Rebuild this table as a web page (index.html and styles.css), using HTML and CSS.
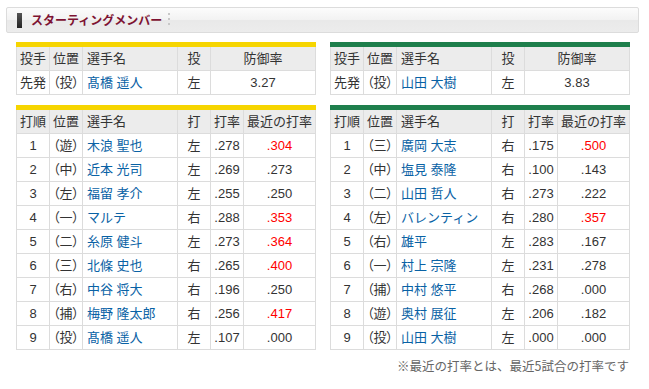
FILE: index.html
```html
<!DOCTYPE html>
<html lang="ja">
<head>
<meta charset="utf-8">
<link rel="stylesheet" href="styles.css">
</head>
<body>
<div class="page">
  <div class="head">
    <span class="head-mark"></span>
    <h2 class="head-title">スターティングメンバー</h2>
    <span class="head-sep"></span>
  </div>
  <div class="teams">
    <div class="team home">
      <table class="tbl">
        <colgroup><col class="c1"><col class="c2"><col class="c3"><col class="c4"><col class="c5p"></colgroup>
        <tr><th>投手</th><th>位置</th><th class="name">選手名</th><th>投</th><th>防御率</th></tr>
        <tr><td>先発</td><td class="pos">（投）</td><td class="name"><a>髙橋 遥人</a></td><td>左</td><td>3.27</td></tr>
      </table>
      <table class="tbl">
        <colgroup><col class="c1"><col class="c2"><col class="c3"><col class="c4"><col class="c5"><col class="c6"></colgroup>
        <tr><th>打順</th><th>位置</th><th class="name">選手名</th><th>打</th><th>打率</th><th>最近の打率</th></tr>
        <tr><td>1</td><td class="pos">（遊）</td><td class="name"><a>木浪 聖也</a></td><td>左</td><td>.278</td><td class="hot">.304</td></tr>
        <tr><td>2</td><td class="pos">（中）</td><td class="name"><a>近本 光司</a></td><td>左</td><td>.269</td><td>.273</td></tr>
        <tr><td>3</td><td class="pos">（左）</td><td class="name"><a>福留 孝介</a></td><td>左</td><td>.255</td><td>.250</td></tr>
        <tr><td>4</td><td class="pos">（一）</td><td class="name"><a>マルテ</a></td><td>右</td><td>.288</td><td class="hot">.353</td></tr>
        <tr><td>5</td><td class="pos">（二）</td><td class="name"><a>糸原 健斗</a></td><td>左</td><td>.273</td><td class="hot">.364</td></tr>
        <tr><td>6</td><td class="pos">（三）</td><td class="name"><a>北條 史也</a></td><td>右</td><td>.265</td><td class="hot">.400</td></tr>
        <tr><td>7</td><td class="pos">（右）</td><td class="name"><a>中谷 将大</a></td><td>右</td><td>.196</td><td>.250</td></tr>
        <tr><td>8</td><td class="pos">（捕）</td><td class="name"><a>梅野 隆太郎</a></td><td>右</td><td>.256</td><td class="hot">.417</td></tr>
        <tr><td>9</td><td class="pos">（投）</td><td class="name"><a>髙橋 遥人</a></td><td>左</td><td>.107</td><td>.000</td></tr>
      </table>
    </div>
    <div class="team away">
      <table class="tbl">
        <colgroup><col class="c1"><col class="c2"><col class="c3"><col class="c4"><col class="c5p"></colgroup>
        <tr><th>投手</th><th>位置</th><th class="name">選手名</th><th>投</th><th>防御率</th></tr>
        <tr><td>先発</td><td class="pos">（投）</td><td class="name"><a>山田 大樹</a></td><td>左</td><td>3.83</td></tr>
      </table>
      <table class="tbl">
        <colgroup><col class="c1"><col class="c2"><col class="c3"><col class="c4"><col class="c5"><col class="c6"></colgroup>
        <tr><th>打順</th><th>位置</th><th class="name">選手名</th><th>打</th><th>打率</th><th>最近の打率</th></tr>
        <tr><td>1</td><td class="pos">（三）</td><td class="name"><a>廣岡 大志</a></td><td>右</td><td>.175</td><td class="hot">.500</td></tr>
        <tr><td>2</td><td class="pos">（中）</td><td class="name"><a>塩見 泰隆</a></td><td>右</td><td>.100</td><td>.143</td></tr>
        <tr><td>3</td><td class="pos">（二）</td><td class="name"><a>山田 哲人</a></td><td>右</td><td>.273</td><td>.222</td></tr>
        <tr><td>4</td><td class="pos">（左）</td><td class="name"><a>バレンティン</a></td><td>右</td><td>.280</td><td class="hot">.357</td></tr>
        <tr><td>5</td><td class="pos">（右）</td><td class="name"><a>雄平</a></td><td>左</td><td>.283</td><td>.167</td></tr>
        <tr><td>6</td><td class="pos">（一）</td><td class="name"><a>村上 宗隆</a></td><td>左</td><td>.231</td><td>.278</td></tr>
        <tr><td>7</td><td class="pos">（捕）</td><td class="name"><a>中村 悠平</a></td><td>右</td><td>.268</td><td>.000</td></tr>
        <tr><td>8</td><td class="pos">（遊）</td><td class="name"><a>奥村 展征</a></td><td>左</td><td>.206</td><td>.182</td></tr>
        <tr><td>9</td><td class="pos">（投）</td><td class="name"><a>山田 大樹</a></td><td>左</td><td>.000</td><td>.000</td></tr>
      </table>
      <p class="note">※最近の打率とは、最近5試合の打率です</p>
    </div>
  </div>
</div>
</body>
</html>
```
FILE: styles.css
```css
* { box-sizing: border-box; }
html, body { margin: 0; padding: 0; background: #fff; }
body {
  font-family: "Liberation Sans", "Noto Sans CJK JP", sans-serif;
  font-size: 13px;
  color: #333;
}
.page { padding: 7px 10px 0 6px; }
.head {
  display: flex;
  align-items: center;
  height: 26px;
  border: 1px solid #dcdcdc;
  border-radius: 2px;
  background: linear-gradient(#fcfcfc 0%, #f2f2f2 50%, #e9e9e9 52%, #ececec 100%);
  padding-left: 10px;
}
.head-mark {
  width: 5px;
  height: 15px;
  background: linear-gradient(#555, #222);
}
.head-title {
  margin: 0 0 0 9px;
  font-family: "Noto Sans CJK JP", sans-serif;
  font-size: 12px;
  font-weight: bold;
  color: #7d1232;
  line-height: 1;
}
.head-sep {
  margin-left: 6px;
  width: 2px;
  height: 14px;
  background: repeating-linear-gradient(#c8c8c8 0 2px, transparent 2px 5px);
}
.teams {
  display: flex;
  gap: 15px;
  padding: 9px 0 0 10px;
}
.team { width: 299px; }
.tbl {
  width: 299px;
  border-collapse: collapse;
  table-layout: fixed;
  margin-bottom: 10px;
}
.home .tbl { border-top: 5px solid #f6d500; }
.away .tbl { border-top: 5px solid #1e7f4c; }
.c1, .c2, .c4, .c5 { width: 33px; }
.c3 { width: 95px; }
.c5p { width: 105px; }
.c6 { width: 72px; }
.tbl th, .tbl td {
  box-sizing: content-box;
  border: 1px solid #dcdcdc;
  height: 23px;
  line-height: 23px;
  padding: 0;
  text-align: center;
  font-weight: normal;
  white-space: nowrap;
  overflow: hidden;
  font-family: "Liberation Sans", "Noto Sans CJK JP", sans-serif;
}
.tbl th { background: #ececec; color: #333; }
.tbl .pos { font-feature-settings: "palt"; letter-spacing: 0; }
.tbl .name { text-align: left; padding-left: 4px; }
.tbl a { color: #0962a5; text-decoration: none; }
.tbl .hot { color: #f00; }
.note {
  margin: -4px 0 0 0;
  text-align: right;
  color: #666;
  font-size: 12.5px;
  font-family: "Noto Sans CJK JP", sans-serif;
}
```
